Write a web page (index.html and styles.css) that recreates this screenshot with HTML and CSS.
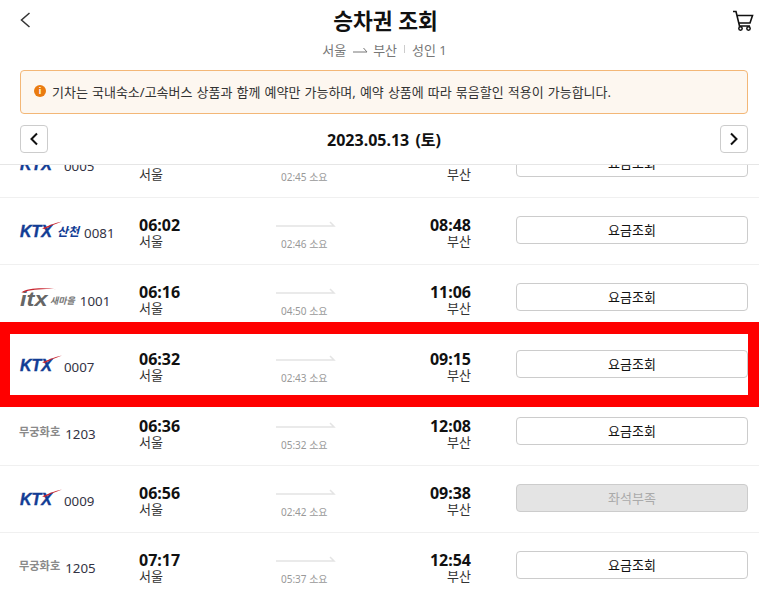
FILE: index.html
```html
<!DOCTYPE html>
<html lang="ko">
<head>
<meta charset="utf-8">
<title>승차권 조회</title>
<link rel="stylesheet" href="styles.css">
</head>
<body>
<div class="page">
  <header class="top">
    <svg class="back" width="11" height="16" viewBox="0 0 11 16"><path d="M9.500 1 L1.500 8 L9.500 15" fill="none" stroke="#333" stroke-width="1.500"/></svg>
    <h1 class="title">승차권 조회</h1>
    <svg class="cart" width="22" height="22" viewBox="0 0 22 22"><path d="M1 1.500h3l3.500 14.500h10.500M5.500 5.500h15l-2.500 7.500H7" fill="none" stroke="#111" stroke-width="1.600"/><circle cx="8.500" cy="18.500" r="1.700" fill="none" stroke="#111" stroke-width="1.500"/><circle cx="16.500" cy="18.500" r="1.700" fill="none" stroke="#111" stroke-width="1.500"/></svg>
  </header>
  <div class="route">
    <span>서울</span>
    <svg class="route-arrow" width="15" height="6" viewBox="0 0 15 6"><path d="M0 5h14L10.500 1" fill="none" stroke="#777" stroke-width="1"/></svg>
    <span>부산</span><i class="sep"></i><span>성인 1</span>
  </div>
  <div class="notice">
    <span class="info">i</span>
    <span class="notice-text">기차는 국내숙소/고속버스 상품과 함께 예약만 가능하며, 예약 상품에 따라 묶음할인 적용이 가능합니다.</span>
  </div>
  <div class="datebar">
    <button class="nav"><svg width="10" height="14" viewBox="0 0 10 14"><path d="M8 1.500 L2.500 7 L8 12.500" fill="none" stroke="#111" stroke-width="2"/></svg></button>
    <strong class="date">2023.05.13 (토)</strong>
    <button class="nav"><svg width="10" height="14" viewBox="0 0 10 14"><path d="M2 1.500 L7.500 7 L2 12.500" fill="none" stroke="#111" stroke-width="2"/></svg></button>
  </div>
  <div class="list">
    <div class="rows">
      <div class="row">
        <div class="train"><span class="logo ktx">KTX<svg class="swoosh" viewBox="0 0 20 8"><path d="M0 7.500 C6 5 13 1.500 20 0.500 C13 3 7 5.500 3 8Z" fill="#c8242f"/></svg></span><span class="no gap">0005</span></div>
        <div class="dep"><b>05:30</b><span>서울</span></div>
        <div class="dur"><svg width="60" height="6" viewBox="0 0 60 6"><path d="M0 5h58L54 1" fill="none" stroke="#e4e4e4" stroke-width="1.500"/></svg><small>02:45 소요</small></div>
        <div class="arr"><b>08:15</b><span>부산</span></div>
        <button class="fare">요금조회</button>
      </div>
      <div class="row">
        <div class="train"><span class="logo ktx">KTX<svg class="swoosh" viewBox="0 0 20 8"><path d="M0 7.500 C6 5 13 1.500 20 0.500 C13 3 7 5.500 3 8Z" fill="#c8242f"/></svg></span><span class="sub sancheon">산천</span><span class="no near">0081</span></div>
        <div class="dep"><b>06:02</b><span>서울</span></div>
        <div class="dur"><svg width="60" height="6" viewBox="0 0 60 6"><path d="M0 5h58L54 1" fill="none" stroke="#e4e4e4" stroke-width="1.500"/></svg><small>02:46 소요</small></div>
        <div class="arr"><b>08:48</b><span>부산</span></div>
        <button class="fare">요금조회</button>
      </div>
      <div class="row">
        <div class="train"><span class="logo itx">itx<svg class="swoosh itx-sw" viewBox="0 0 36 6"><path d="M0 6 C6 1 20 0 36 2 C22 1.500 10 2.500 2 6Z" fill="#c8242f"/></svg></span><span class="sub saemaeul">새마을</span><span class="no near low">1001</span></div>
        <div class="dep"><b>06:16</b><span>서울</span></div>
        <div class="dur"><svg width="60" height="6" viewBox="0 0 60 6"><path d="M0 5h58L54 1" fill="none" stroke="#e4e4e4" stroke-width="1.500"/></svg><small>04:50 소요</small></div>
        <div class="arr"><b>11:06</b><span>부산</span></div>
        <button class="fare">요금조회</button>
      </div>
      <div class="row">
        <div class="train"><span class="logo ktx">KTX<svg class="swoosh" viewBox="0 0 20 8"><path d="M0 7.500 C6 5 13 1.500 20 0.500 C13 3 7 5.500 3 8Z" fill="#c8242f"/></svg></span><span class="no gap">0007</span></div>
        <div class="dep"><b>06:32</b><span>서울</span></div>
        <div class="dur"><svg width="60" height="6" viewBox="0 0 60 6"><path d="M0 5h58L54 1" fill="none" stroke="#e4e4e4" stroke-width="1.500"/></svg><small>02:43 소요</small></div>
        <div class="arr"><b>09:15</b><span>부산</span></div>
        <button class="fare">요금조회</button>
      </div>
      <div class="row">
        <div class="train"><span class="logo mugunghwa">무궁화호</span><span class="no">1203</span></div>
        <div class="dep"><b>06:36</b><span>서울</span></div>
        <div class="dur"><svg width="60" height="6" viewBox="0 0 60 6"><path d="M0 5h58L54 1" fill="none" stroke="#e4e4e4" stroke-width="1.500"/></svg><small>05:32 소요</small></div>
        <div class="arr"><b>12:08</b><span>부산</span></div>
        <button class="fare">요금조회</button>
      </div>
      <div class="row">
        <div class="train"><span class="logo ktx">KTX<svg class="swoosh" viewBox="0 0 20 8"><path d="M0 7.500 C6 5 13 1.500 20 0.500 C13 3 7 5.500 3 8Z" fill="#c8242f"/></svg></span><span class="no gap">0009</span></div>
        <div class="dep"><b>06:56</b><span>서울</span></div>
        <div class="dur"><svg width="60" height="6" viewBox="0 0 60 6"><path d="M0 5h58L54 1" fill="none" stroke="#e4e4e4" stroke-width="1.500"/></svg><small>02:42 소요</small></div>
        <div class="arr"><b>09:38</b><span>부산</span></div>
        <button class="fare off">좌석부족</button>
      </div>
      <div class="row">
        <div class="train"><span class="logo mugunghwa">무궁화호</span><span class="no">1205</span></div>
        <div class="dep"><b>07:17</b><span>서울</span></div>
        <div class="dur"><svg width="60" height="6" viewBox="0 0 60 6"><path d="M0 5h58L54 1" fill="none" stroke="#e4e4e4" stroke-width="1.500"/></svg><small>05:37 소요</small></div>
        <div class="arr"><b>12:54</b><span>부산</span></div>
        <button class="fare">요금조회</button>
      </div>
    </div>
    <div class="highlight"></div>
  </div>
</div>
</body>
</html>
```
FILE: styles.css
```css
* { box-sizing: border-box; }
html, body { margin: 0; padding: 0; }
body {
  width: 759px;
  height: 590px;
  overflow: hidden;
  background: #fff;
  color: #111;
  font-family: "Noto Sans", "Noto Sans CJK KR", sans-serif;
}
.page { display: flex; flex-direction: column; height: 590px; }
.top {
  display: flex;
  align-items: center;
  justify-content: space-between;
  height: 42px;
  padding: 0 5px 0 20px;
}
.title { margin: 0 0 0 8px; font-size: 21.500px; font-weight: 700; line-height: 28px; }
.back { display: block; margin-bottom: 3px; }
.cart { display: block; margin: 0 0 1px; }
.route {
  display: flex;
  align-items: center;
  justify-content: center;
  gap: 4px;
  height: 16px;
  margin-top: -1px;
  padding-left: 10px;
  font-size: 13px;
  color: #777;
}
.route-arrow { margin: 1px 1px 0 3px; }
.sep { display: block; width: 1px; height: 8px; background: #ccc; margin: 0 3px; }
.notice {
  display: flex;
  align-items: center;
  gap: 6px;
  height: 44px;
  margin: 13px 11px 0 20px;
  padding: 0 13px;
  background: #fdf7f0;
  border: 1px solid #f3b777;
  border-radius: 4px;
  font-size: 13px;
  word-spacing: 0.7px;
  color: #333;
}
.notice-text { margin-top: -2px; }
.info {
  display: flex;
  align-items: center;
  justify-content: center;
  width: 12px;
  height: 12px;
  margin-top: -3px;
  border-radius: 50%;
  background: #ea7b10;
  color: #fff;
  font-size: 9px;
  font-weight: 700;
  font-family: "Liberation Sans", sans-serif;
}
.datebar {
  display: flex;
  align-items: center;
  justify-content: space-between;
  height: 51px;
  padding: 0 11px 0 20px;
  border-bottom: 1px solid #e6e6e6;
}
.nav {
  display: flex;
  align-items: center;
  justify-content: center;
  width: 28px;
  height: 28px;
  padding: 0;
  background: #fff;
  border: 1px solid #ccc;
  border-radius: 4px;
}
.date { font-size: 16px; font-weight: 700; word-spacing: 2px; }
.list { position: relative; flex: 1; overflow: hidden; }
.rows { margin-top: -34px; }
.row {
  display: grid;
  grid-template-columns: 119px 137px 135px 60px 1fr;
  align-items: center;
  height: 67px;
  padding-left: 20px;
  border-bottom: 1px solid #f0f0f0;
}
.train { display: flex; align-items: center; padding-top: 2px; }
.logo { position: relative; display: block; }
.ktx {
  width: 33px;
  margin-top: -1px;
  font: italic 700 16px/16px "Liberation Sans", sans-serif;
  color: #123c94;
  -webkit-text-stroke: 0.4px #123c94;
}
.swoosh { position: absolute; left: 22px; top: -3px; width: 20px; height: 8px; }
.itx {
  width: 29px;
  margin-top: -1px;
  font: italic 700 20px/16px "Liberation Sans", sans-serif;
  color: #666;
  transform: scaleX(1.18);
  transform-origin: left center;
}
.itx-sw { left: 1px; top: -4px; width: 30px; height: 6px; }
.sub { display: block; font-weight: 700; }
.sancheon { margin-left: 4px; font-size: 12px; line-height: 14px; font-style: italic; color: #123c94; }
.saemaeul { margin-left: 1px; margin-top: 2px; font-size: 9px; font-style: italic; color: #777; }
.mugunghwa { flex: 0 0 41px; margin: -2px 5px 0 -1px; font-size: 11.200px; line-height: 14px; font-weight: 700; color: #8a8a8a; white-space: nowrap; }
.no { margin-top: 2px; font-size: 13.300px; color: #334; }
.gap { margin-left: 11px; }
.near { margin-left: 5px; }
.low { margin-top: 4px; }
.dep, .arr { display: flex; flex-direction: column; padding-top: 2px; }
.dep b, .arr b { font-size: 16px; font-weight: 700; line-height: 18px; }
.dep span, .arr span { font-size: 13px; line-height: 14px; color: #333; }
.arr { align-items: flex-end; }
.dur { align-self: start; display: flex; flex-direction: column; gap: 11px; padding-top: 23px; }
.dur svg { display: block; }
.dur small { padding-left: 5px; font-size: 10px; color: #999; line-height: 12px; }
.fare {
  height: 28px;
  margin: 0 11px 2px 45px;
  padding: 0 0 2px;
  background: #fff;
  border: 1px solid #ccc;
  border-radius: 4px;
  font: 13px "Noto Sans", "Noto Sans CJK KR", sans-serif;
  color: #111;
}
.off { background: #e4e4e4; color: #aaa; }
.highlight {
  position: absolute;
  left: 0;
  right: 0;
  top: 157px;
  height: 85px;
  border: solid #f00;
  border-width: 12px 11px 12px 10px;
  pointer-events: none;
}
```
